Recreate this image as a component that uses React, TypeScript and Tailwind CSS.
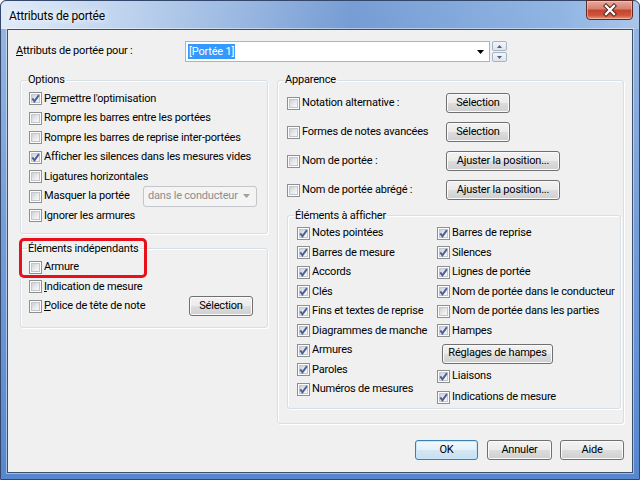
import React from 'react'

const FONT = "font-['Roboto',sans-serif] text-[11px] tracking-[-0.2px] text-black"

function Box({ checked = false }: { checked?: boolean }) {
  return (
    <span className="relative flex h-[13px] w-[13px] shrink-0 items-center justify-center border border-[#8e8f8f] bg-[#fdfdfd]">
      <span className="h-[9px] w-[9px] border border-[#c3c7cd] bg-[linear-gradient(135deg,#cdd0d5_0%,#e9eaec_55%,#f8f8f9_100%)]" />
      {checked && (
        <svg viewBox="0 0 11 11" className="absolute left-0 top-0 h-[11px] w-[11px]">
          <path d="M2.3 5.4 L4.4 8.3 L8.9 2.1" fill="none" stroke="#4a5f97" strokeWidth="1.9" />
        </svg>
      )}
    </span>
  )
}

function Btn({
  children,
  className = '',
  primary = false,
}: {
  children: React.ReactNode
  className?: string
  primary?: boolean
}) {
  return (
    <div
      className={`flex h-[20px] shrink-0 items-center justify-center rounded-[3px] border ${
        primary
          ? 'border-[#3c7fb1] bg-[linear-gradient(#f1f8fd_0%,#e4f0f8_50%,#d4e7f4_50%,#c8def0_100%)] shadow-[inset_0_0_0_1px_#c6e8fa]'
          : 'border-[#707070] bg-[linear-gradient(#f2f2f2_0%,#ebebeb_50%,#dddddd_50%,#cfcfcf_100%)] shadow-[inset_0_0_0_1px_#fbfbfb]'
      } ${className}`}
    >
      {children}
    </div>
  )
}

function Row({
  label,
  checked,
  className = '',
  children,
}: {
  label: React.ReactNode
  checked?: boolean
  className?: string
  children?: React.ReactNode
}) {
  return (
    <div className={`flex h-[19.5px] items-center gap-[2px] ${className}`}>
      <Box checked={checked} />
      <span className="whitespace-nowrap">{label}</span>
      {children}
    </div>
  )
}

// Win7 group box: the legend sits on the top border, content padding lives in the inner div
function Group({
  title,
  className = '',
  inner = '',
  children,
}: {
  title: string
  className?: string
  inner?: string
  children: React.ReactNode
}) {
  return (
    <fieldset
      className={`m-0 rounded-[3px] border border-[#d5dfe5] p-0 shadow-[inset_1px_1px_0_#ffffff,1px_1px_0_#ffffff] ${className}`}
    >
      <legend className="ml-[6px] px-[1px] leading-[16px]">{title}</legend>
      <div className={inner}>{children}</div>
    </fieldset>
  )
}

export default function App() {
  return (
    <div className={`h-[480px] w-[640px] bg-white ${FONT}`}>
      <div className="flex h-full w-full flex-col rounded-t-[6px] border border-[#34466a] bg-[linear-gradient(180deg,#98b8e3_0%,#769fd8_45%,#5687cf_100%)] px-[6px] pb-[6px]">
        {/* title bar */}
        <div className="-mx-[6px] flex h-[28px] shrink-0 items-start justify-between rounded-t-[6px] bg-[linear-gradient(90deg,rgba(232,241,251,0.9)_0%,rgba(200,218,240,0.7)_22%,rgba(80,125,195,0.45)_55%,rgba(140,180,228,0.5)_88%,rgba(185,208,238,0.6)_100%)] pl-[8px] pr-[6px]">
          <span className="mt-[7px] text-[12px] leading-[16px] [text-shadow:0_0_6px_#ffffff,0_0_10px_#ffffff]">
            Attributs de portée
          </span>
          <div className="-mt-[1px] flex h-[20px] w-[47px] items-center justify-center rounded-b-[4px] border border-[#5e2a25] bg-[linear-gradient(#e9a99c_0%,#d77f6e_45%,#c4432d_50%,#d0553d_80%,#e59a7a_100%)] shadow-[inset_0_0_0_1px_rgba(255,210,200,0.5)]">
            <svg viewBox="0 0 16 14" className="h-[14px] w-[16px]">
              <path d="M4 3 L12 11 M12 3 L4 11" stroke="#4b1f1a" strokeWidth="4.2" strokeLinecap="square" fill="none" />
              <path d="M4 3 L12 11 M12 3 L4 11" stroke="#ffffff" strokeWidth="2.3" strokeLinecap="square" fill="none" />
            </svg>
          </div>
        </div>

        {/* client */}
        <div className="flex flex-1 flex-col border border-[#3e4f6c] bg-[#f0f0f0] shadow-[0_0_0_1px_rgba(255,255,255,0.45)]">
          <div className="mt-[11px] flex h-[21px] items-center">
            <span className="w-[177px] pl-[8px]">
              <span className="underline">A</span>ttributs de portée pour :
            </span>
            <div className="flex h-[21px] w-[305px] items-center border border-[#a3b6cc] bg-white pl-[2px] pr-[5px]">
              <span className="bg-[#3399ff] px-[1px] leading-[15px] text-white">[Portée 1]</span>
              <svg viewBox="0 0 7 4" className="ml-auto h-[4px] w-[7px]">
                <path d="M0 0 H7 L3.5 4 Z" fill="#000" />
              </svg>
            </div>
            <div className="ml-[2px] flex h-[21px] w-[15px] flex-col gap-[1px]">
              <div className="flex flex-1 items-center justify-center rounded-[2px] border border-[#a7b4c4] bg-[linear-gradient(#f3f6f9,#dfe5ec)]">
                <svg viewBox="0 0 5 3" className="h-[3px] w-[5px]">
                  <path d="M0 3 H5 L2.5 0 Z" fill="#4d6185" />
                </svg>
              </div>
              <div className="flex flex-1 items-center justify-center rounded-[2px] border border-[#a7b4c4] bg-[linear-gradient(#f3f6f9,#dfe5ec)]">
                <svg viewBox="0 0 5 3" className="h-[3px] w-[5px]">
                  <path d="M0 0 H5 L2.5 3 Z" fill="#4d6185" />
                </svg>
              </div>
            </div>
          </div>

          <div className="ml-[12px] mt-[10px] flex items-start gap-[9px]">
            {/* left column */}
            <div className="flex w-[248px] flex-col gap-[7px]">
              <Group title="Options" inner="pb-[7px] pl-[8px] pr-[10px] pt-[1px]">
                <Row checked label={<>P<span className="underline">e</span>rmettre l'optimisation</>} />
                <Row label="Rompre les barres entre les portées" />
                <Row label="Rompre les barres de reprise inter-portées" />
                <Row checked label="Afficher les silences dans les mesures vides" />
                <Row label="Ligatures horizontales" />
                <Row label="Masquer la portée">
                  <div className="ml-auto flex h-[21px] w-[114px] items-center rounded-[3px] border border-[#c2c5c9] bg-[#f4f4f4] pl-[4px] pr-[6px] text-[#8d8d8d]">
                    <span>dans le conducteur</span>
                    <svg viewBox="0 0 7 4" className="ml-auto h-[4px] w-[7px]">
                      <path d="M0 0 H7 L3.5 4 Z" fill="#a0a0a0" />
                    </svg>
                  </div>
                </Row>
                <Row label="Ignorer les armures" />
              </Group>

              <div className="relative">
                <Group title="Éléments indépendants" inner="pb-[11px] pl-[8px] pr-[14px] pt-[1px]">
                  <Row label="Armure" />
                  <Row label={<><span className="underline">I</span>ndication de mesure</>} />
                  <Row label={<><span className="underline">P</span>olice de tête de note</>}>
                    <Btn className="ml-auto w-[64px]">Sélection</Btn>
                  </Row>
                </Group>
                <div className="absolute -left-[1px] -top-[3px] h-[40px] w-[128px] rounded-[5px] border-[3px] border-[#e8101a]" />
              </div>
            </div>

            {/* right column */}
            <Group title="Apparence" className="w-[347px]" inner="pb-[14px] pt-[0.5px]">
              {[
                ['Notation alternative :', 'Sélection', 'w-[64px]'],
                ['Formes de notes avancées', 'Sélection', 'w-[64px]'],
                ['Nom de portée :', 'Ajuster la position...', 'w-[114px]'],
                ['Nom de portée abrégé :', 'Ajuster la position...', 'w-[114px]'],
              ].map(([label, btn, w]) => (
                <div key={label} className="flex h-[29px] items-center gap-[2px] pl-[9px]">
                  <Box />
                  <span className="w-[142px] whitespace-nowrap">{label}</span>
                  <Btn className={w}>{btn}</Btn>
                </div>
              ))}

              <Group title="Éléments à afficher" className="ml-[9px] mr-[2px] mt-[3px]" inner="pb-[1px] pl-[9px]">
                <div className="flex items-start">
                  <div className="flex w-[140px] flex-col">
                    {[
                      'Notes pointées',
                      'Barres de mesure',
                      'Accords',
                      'Clés',
                      'Fins et textes de reprise',
                      'Diagrammes de manche',
                      'Armures',
                      'Paroles',
                      'Numéros de mesures',
                    ].map((t) => (
                      <Row key={t} checked label={t} />
                    ))}
                  </div>
                  <div className="flex flex-col">
                    <Row checked label="Barres de reprise" />
                    <Row checked label="Silences" />
                    <Row checked label="Lignes de portée" />
                    <Row checked label="Nom de portée dans le conducteur" />
                    <Row label="Nom de portée dans les parties" />
                    <Row checked label="Hampes" />
                    <div className="h-[26px] pl-[5px] pt-[3px]">
                      <Btn className="w-[111px]">Réglages de hampes</Btn>
                    </div>
                    <Row checked label="Liaisons" />
                    <Row checked label="Indications de mesure" className="mt-[1.75px]" />
                  </div>
                </div>
              </Group>
            </Group>
          </div>

          <div className="mr-[8px] mt-[16px] flex justify-end gap-[8px]">
            <Btn primary className="mr-[1px] w-[63px]">OK</Btn>
            <Btn className="w-[65px]">Annuler</Btn>
            <Btn className="w-[64px]">Aide</Btn>
          </div>
        </div>
      </div>
    </div>
  )
}
